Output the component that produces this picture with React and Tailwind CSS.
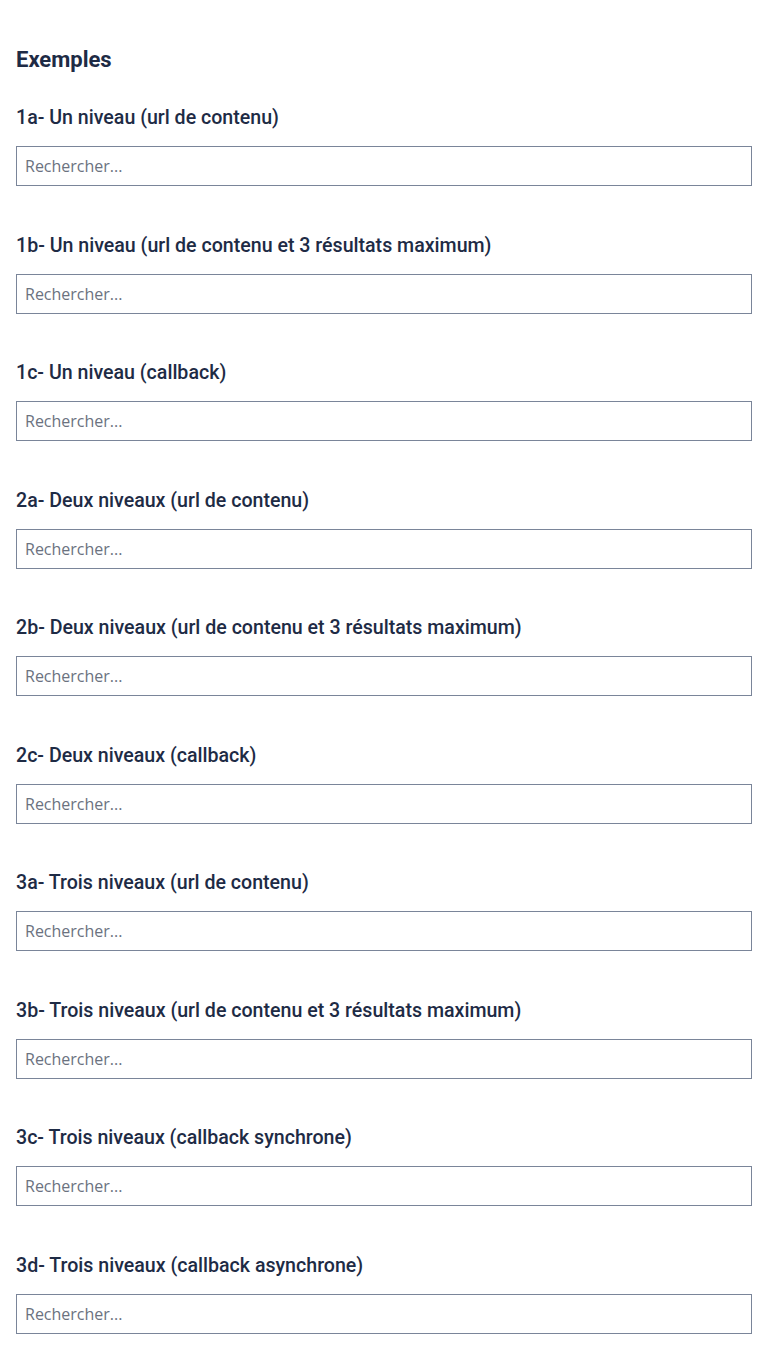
const examples = [
  "1a- Un niveau (url de contenu)",
  "1b- Un niveau (url de contenu et 3 résultats maximum)",
  "1c- Un niveau (callback)",
  "2a- Deux niveaux (url de contenu)",
  "2b- Deux niveaux (url de contenu et 3 résultats maximum)",
  "2c- Deux niveaux (callback)",
  "3a- Trois niveaux (url de contenu)",
  "3b- Trois niveaux (url de contenu et 3 résultats maximum)",
  "3c- Trois niveaux (callback synchrone)",
  "3d- Trois niveaux (callback asynchrone)",
];

export default function App() {
  return (
    <div className="min-h-screen bg-white px-4 pt-[46px] text-[#1e2b45] font-['Roboto',sans-serif]">
      <h2 className="text-[22px] leading-[28px] font-bold mb-[29px]">Exemples</h2>
      {examples.map((label) => (
        <div key={label} className="mb-[44.5px]">
          <h3 className="text-[19.6px] leading-[30px] font-medium mb-[13px]">{label}</h3>
          <input
            type="text"
            placeholder="Rechercher..."
            className="block w-full h-10 px-2 border border-[#7a8599] bg-white text-[16px] font-['Open_Sans',sans-serif] text-gray-700 placeholder:text-[#6b7280] outline-none"
          />
        </div>
      ))}
    </div>
  );
}
